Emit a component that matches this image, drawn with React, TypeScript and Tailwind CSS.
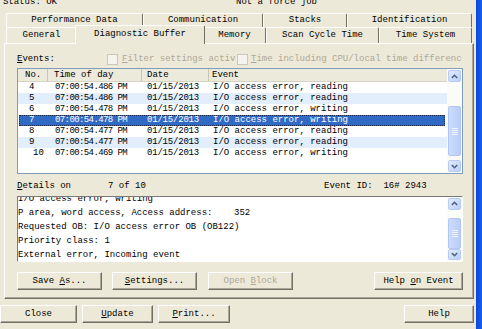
import React from "react";

const rows = [
  { no: "4", time: "07:00:54.486 PM", date: "01/15/2013", ev: "I/O access error, reading", alt: false },
  { no: "5", time: "07:00:54.486 PM", date: "01/15/2013", ev: "I/O access error, reading", alt: true },
  { no: "6", time: "07:00:54.478 PM", date: "01/15/2013", ev: "I/O access error, writing", alt: false },
  { no: "7", time: "07:00:54.478 PM", date: "01/15/2013", ev: "I/O access error, writing", sel: true },
  { no: "8", time: "07:00:54.477 PM", date: "01/15/2013", ev: "I/O access error, reading", alt: false },
  { no: "9", time: "07:00:54.477 PM", date: "01/15/2013", ev: "I/O access error, reading", alt: true },
  { no: "10", time: "07:00:54.469 PM", date: "01/15/2013", ev: "I/O access error, writing", alt: false },
];

const Chevron = ({ down }: { down?: boolean }) => (
  <svg width="7" height="5" viewBox="0 0 7 5">
    <path
      d={down ? "M0.8 1 L3.5 3.7 L6.2 1" : "M0.8 4 L3.5 1.3 L6.2 4"}
      fill="none"
      stroke="#4d6185"
      strokeWidth="1.6"
    />
  </svg>
);

const ScrollBtn = ({ down }: { down?: boolean }) => (
  <div className="w-[13px] h-[12px] mx-auto rounded-[2px] border border-[#b7cbf7] bg-gradient-to-br from-[#e3ebfe] to-[#bccff9] flex items-center justify-center">
    <Chevron down={down} />
  </div>
);

const ScrollBar = ({ before, thumb }: { before: number; thumb: number }) => (
  <div className="w-[15px] h-full bg-[#fbfbf8] flex flex-col py-[1px]">
    <ScrollBtn />
    <div className="flex-1 flex flex-col">
      <div style={{ height: before }} />
      <div
        className="w-[13px] mx-auto rounded-[2px] border border-[#b2c7f6] bg-gradient-to-r from-[#cddcfd] to-[#bacdf8] flex flex-col items-center justify-center gap-[1px]"
        style={{ height: thumb }}
      >
        <div className="w-[6px] h-[1px] bg-[#eef3fe]" />
        <div className="w-[6px] h-[1px] bg-[#eef3fe]" />
        <div className="w-[6px] h-[1px] bg-[#eef3fe]" />
        <div className="w-[6px] h-[1px] bg-[#eef3fe]" />
      </div>
    </div>
    <ScrollBtn down />
  </div>
);

const Btn = ({ children, w, disabled }: { children: React.ReactNode; w: string; disabled?: boolean }) => (
  <div
    className={`${w} h-[18px] border border-t-white border-l-white border-r-[#716f64] border-b-[#716f64] shadow-[inset_-1px_-1px_0_#aca899] flex items-center justify-center ${
      disabled ? "text-[#aca899]" : "text-black"
    }`}
  >
    <span className="whitespace-pre">{children}</span>
  </div>
);

const Tab = ({ w, children }: { w: string; children: React.ReactNode }) => (
  <div
    className={`${w} h-full border-t border-l border-r border-t-white border-l-white border-r-[#716f64] rounded-t-[2px] flex items-center justify-center`}
  >
    {children}
  </div>
);

const Check = () => <div className="w-[11px] h-[11px] border border-[#cac8bb] bg-[#f4f3ee]" />;

export default function App() {
  return (
    <div className="w-[482px] h-[329px] overflow-hidden bg-[#ece9d8] flex text-[9px] leading-[11px] text-black font-['Liberation_Mono',monospace] whitespace-nowrap">
      <div className="flex-1 flex flex-col">
        {/* status line, partly scrolled off */}
        <div className="h-[13px] overflow-hidden">
          <div className="flex -mt-[3px]">
            <span className="pl-[3px] w-[236px]">Status: OK</span>
            <span>Not a force job</span>
          </div>
        </div>

        {/* tabs back row */}
        <div className="h-[14px] flex pl-[6px]">
          <Tab w="w-[137px]">Performance Data</Tab>
          <Tab w="w-[120px]">Communication</Tab>
          <Tab w="w-[84px]">Stacks</Tab>
          <Tab w="w-[125px]">Identification</Tab>
        </div>

        {/* tabs front row */}
        <div className="h-[16px] flex pl-[6px] items-end">
          <Tab w="w-[71px]">General</Tab>
          <div className="relative z-10 -mx-[2px] w-[130px] h-[19px] -mb-[1px] pb-[2px] bg-[#ece9d8] border-t border-l border-r border-t-white border-l-white border-r-[#716f64] rounded-t-[2px] flex items-center justify-center">
            Diagnostic Buffer
          </div>
          <Tab w="w-[63px]">Memory</Tab>
          <Tab w="w-[113px]">Scan Cycle Time</Tab>
          <Tab w="w-[93px]">Time System</Tab>
        </div>

        {/* tab page */}
        <div className="ml-[4px] w-[470px] h-[256px] border border-t-white border-l-white border-r-[#716f64] border-b-[#716f64] shadow-[inset_-1px_-1px_0_#aca899] pl-[12px] pt-[9px] flex flex-col">
          <div className="h-[12px] flex items-center">
            <span className="w-[90px]">
              <u>E</u>vents:
            </span>
            <Check />
            <span className="w-[119px] pl-[4px] overflow-hidden text-[#aca899]">
              <u>F</u>ilter settings activ
            </span>
            <Check />
            <span className="w-[215px] pl-[3px] overflow-hidden text-[#aca899]">
              <u>T</u>ime including CPU/local time differenc
            </span>
          </div>

          {/* event list */}
          <div className="mt-[3px] w-[446px] h-[106px] border border-[#7f9db9] bg-white flex">
            <div className="flex-1 flex flex-col">
              <div className="h-[13px] flex bg-[#ebeadb] border-b border-[#d6d2c2]">
                <div className="w-[30px] pl-[7px] border-r border-[#c7c5b2] flex items-center">No.</div>
                <div className="w-[94px] pl-[6px] border-r border-[#c7c5b2] flex items-center">Time of day</div>
                <div className="w-[67px] pl-[5px] border-r border-[#c7c5b2] flex items-center">Date</div>
                <div className="flex-1 pl-[3px] flex items-center">Event</div>
              </div>
              {rows.map((r) => (
                <div
                  key={r.no}
                  className={`h-[11px] flex items-center ${
                    r.sel
                      ? "ml-[1px] mr-[2px] bg-[#316ac5] text-white outline-1 outline-dotted outline-offset-[-1px] outline-[#1a2850]"
                      : r.alt
                      ? "bg-[#e2eefb]"
                      : ""
                  }`}
                >
                  <div className={`w-[30px] ${r.no === "10" ? "pl-[15px]" : "pl-[11px]"} ${r.sel ? "-ml-[1px]" : ""}`}>{r.no}</div>
                  <div className="w-[94px] pl-[7px] tracking-[-0.6px]">{r.time}</div>
                  <div className="w-[67px] pl-[5px] tracking-[-0.2px]">{r.date}</div>
                  <div className="flex-1 pl-[4px]">{r.ev}</div>
                </div>
              ))}
            </div>
            <ScrollBar before={24} thumb={50} />
          </div>

          <div className="mt-[6px] h-[12px] flex items-center">
            <span className="w-[91px]">
              <u>D</u>etails on
            </span>
            <span className="w-[216px]">7 of 10</span>
            <span className="whitespace-pre">Event ID:  16# 2943</span>
          </div>

          {/* details text */}
          <div className="mt-[4px] w-[446px] h-[66px] border border-t-[#7a7a7a] border-l-[#7a7a7a] border-r-white border-b-white bg-white flex">
            <div className="flex-1 overflow-hidden whitespace-pre leading-[14px]">
              <div className="-mt-[5px]">
                <div>I/O access error, writing</div>
                <div>P area, word access, Access address:    352</div>
                <div>Requested OB: I/O access error OB (OB122)</div>
                <div>Priority class: 1</div>
                <div>External error, Incoming event</div>
              </div>
            </div>
            <ScrollBar before={8} thumb={31} />
          </div>

          <div className="mt-[10px] flex w-[446px]">
            <Btn w="w-[85px]">
              Save <u>A</u>s...
            </Btn>
            <div className="w-[10px]" />
            <Btn w="w-[85px]">
              <u>S</u>ettings...
            </Btn>
            <div className="w-[11px]" />
            <Btn w="w-[85px]" disabled>
              Open <u>B</u>lock
            </Btn>
            <div className="flex-1" />
            <Btn w="w-[89px]">
              Help <u>o</u>n Event
            </Btn>
          </div>
        </div>

        <div className="mt-[6px] flex">
          <Btn w="w-[77px]">Close</Btn>
          <div className="w-[5px]" />
          <Btn w="w-[71px]">
            <u>U</u>pdate
          </Btn>
          <div className="w-[5px]" />
          <Btn w="w-[72px]">
            <u>P</u>rint...
          </Btn>
          <div className="w-[174px]" />
          <Btn w="w-[70px]">Help</Btn>
        </div>
      </div>
      <div className="w-[6px] bg-gradient-to-r from-[#0a45dc] to-[#1660ef]" />
    </div>
  );
}
